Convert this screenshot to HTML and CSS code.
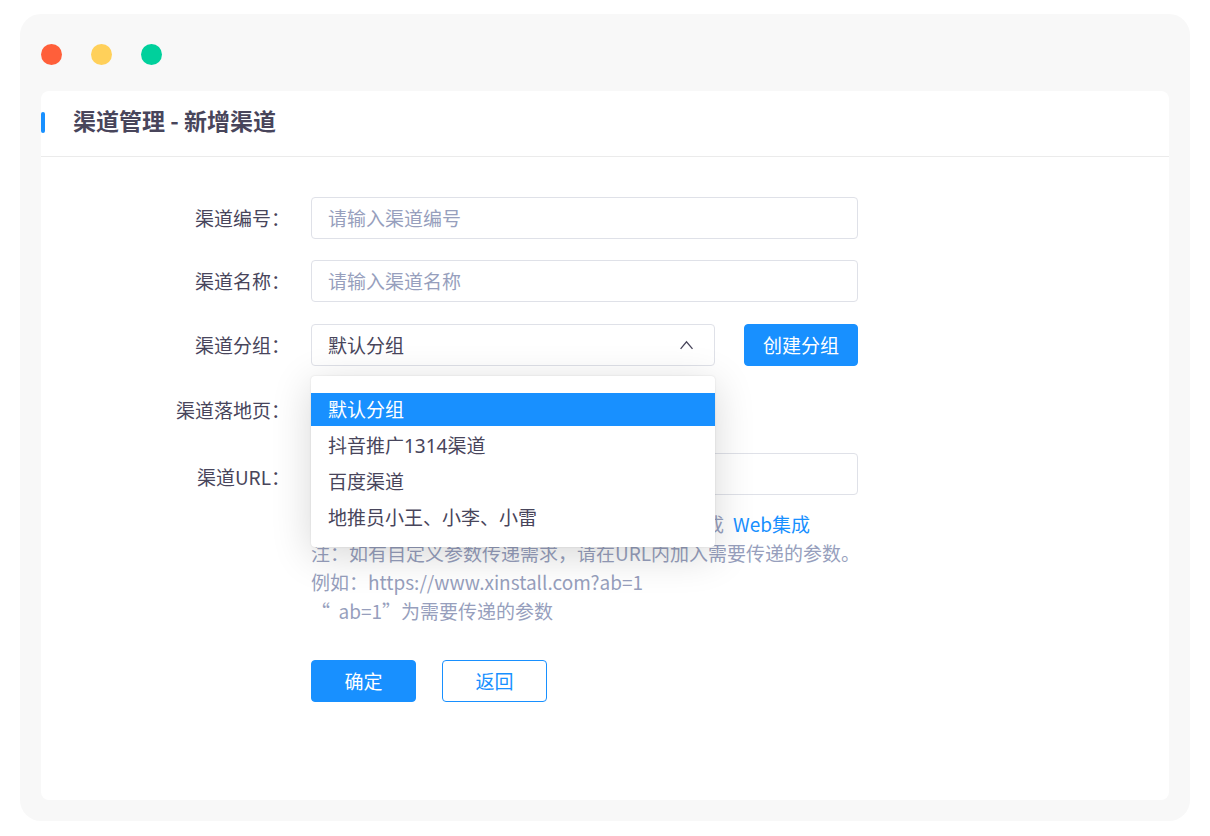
FILE: index.html
```html
<!DOCTYPE html>
<html lang="zh-CN">
<head>
<meta charset="utf-8">
<meta name="viewport" content="width=device-width, initial-scale=1">
<title>渠道管理 - 新增渠道</title>
<link rel="stylesheet" href="styles.css">
</head>
<body>
<div class="window">
  <div class="window-dots">
    <span class="dot dot-red"></span>
    <span class="dot dot-yellow"></span>
    <span class="dot dot-green"></span>
  </div>
  <main class="panel">
    <header class="panel-header">
      <span class="accent"></span>
      <h1 class="title">渠道管理 - 新增渠道</h1>
    </header>
    <form class="form">
      <div class="row">
        <label class="label" for="code">渠道编号：</label>
        <input class="field" id="code" type="text" placeholder="请输入渠道编号">
      </div>
      <div class="row">
        <label class="label" for="name">渠道名称：</label>
        <input class="field" id="name" type="text" placeholder="请输入渠道名称">
      </div>
      <div class="row row-roomy">
        <label class="label" for="group">渠道分组：</label>
        <div class="group">
          <div class="select-box">
            <select class="field select" id="group">
              <option>默认分组</option>
              <option>抖音推广1314渠道</option>
              <option>百度渠道</option>
              <option>地推员小王、小李、小雷</option>
            </select>
            <svg class="chevron" viewBox="0 0 14 10" aria-hidden="true"><path d="M.6 8.8 6.5 1.8l6 7"/></svg>
            <ul class="menu" role="listbox" aria-label="渠道分组">
              <li class="option option-active" role="option" aria-selected="true">默认分组</li>
              <li class="option" role="option" aria-selected="false">抖音推广1314渠道</li>
              <li class="option" role="option" aria-selected="false">百度渠道</li>
              <li class="option" role="option" aria-selected="false">地推员小王、小李、小雷</li>
            </ul>
          </div>
          <button class="button button-wide" type="button">创建分组</button>
        </div>
      </div>
      <div class="row row-roomy">
        <span class="label">渠道落地页：</span>
      </div>
      <div class="row row-top">
        <label class="label label-tall" for="url">渠道URL：</label>
        <div class="stack">
          <input class="field" id="url" type="text">
          <div class="notes">
            <p class="note note-links"><span>成</span><a class="link" href="#web">Web集成</a></p>
            <p class="note">注：如有自定义参数传递需求，请在URL内加入需要传递的参数。</p>
            <p class="note">例如：https://www.xinstall.com?ab=1</p>
            <p class="note">“&nbsp;&nbsp;ab=1”为需要传递的参数</p>
          </div>
          <div class="actions">
            <button class="button" type="submit">确定</button>
            <button class="button button-outline" type="button">返回</button>
          </div>
        </div>
      </div>
    </form>
  </main>
</div>
</body>
</html>
```

FILE: styles.css
```css
* {
  box-sizing: border-box;
}

body {
  margin: 0;
  padding: 14px 20px 15px;
  background: #fff;
  color: #48455b;
  font-family: "Noto Sans CJK SC", sans-serif;
  font-size: 19px;
  line-height: 29px;
}

.window {
  display: flex;
  flex-direction: column;
  gap: 26px;
  min-height: calc(100vh - 29px);
  padding: 30px 21px 21px;
  border-radius: 21px;
  background: #f8f8f8;
}

.window-dots {
  display: flex;
  gap: 29px;
}

.dot {
  width: 21px;
  height: 21px;
  border-radius: 50%;
}

.dot-red { background: #ff5f3a; }
.dot-yellow { background: #ffd05a; }
.dot-green { background: #00d09c; }

.panel {
  flex: 1;
  border-radius: 8px;
  background: #fff;
}

.panel-header {
  display: flex;
  align-items: center;
  gap: 28px;
  padding: 14px 0 17px;
  border-bottom: 1px solid #ebebeb;
}

.accent {
  width: 4px;
  height: 21px;
  border-radius: 2px;
  background: #1890ff;
}

.title {
  margin: 0;
  padding-bottom: 4px;
  font-size: 23px;
  font-weight: 700;
  line-height: 30px;
}

.form {
  display: flex;
  flex-direction: column;
  gap: 21px;
  padding: 40px 0;
}

.row {
  display: grid;
  grid-template-columns: 249px minmax(0, 547px);
  align-items: center;
  gap: 21px;
}

.row-roomy { min-height: 44px; }
.row-top { align-items: start; }

.label {
  padding-bottom: 2px;
  text-align: right;
}

.label-tall { line-height: 48px; }

.field {
  width: 100%;
  height: 42px;
  padding: 0 16px 2px;
  border: 1px solid #dfe1e8;
  border-radius: 4px;
  outline: 0;
  background: #fff;
  color: inherit;
  font: inherit;
}

.field::placeholder {
  color: #979fbd;
  opacity: 1;
}

.group {
  display: flex;
  gap: 29px;
}

.select-box {
  position: relative;
  flex: 1;
  min-width: 0;
}

.select {
  display: block;
  appearance: none;
}

.chevron {
  position: absolute;
  top: 16px;
  right: 21px;
  width: 14px;
  height: 10px;
  fill: none;
  stroke: #48455b;
  stroke-width: 1.3;
  pointer-events: none;
}

.menu {
  position: absolute;
  z-index: 1;
  top: 52px;
  left: 0;
  display: flex;
  flex-direction: column;
  gap: 3px;
  width: 100%;
  margin: 0;
  padding: 17px 0 13px;
  border-radius: 4px;
  background: #fff;
  box-shadow: 0 0 2px rgba(0, 0, 0, 0.12), 0 8px 40px rgba(0, 0, 0, 0.16);
  font-family: "Noto Sans", "Noto Sans CJK SC", sans-serif;
  list-style: none;
}

.option {
  padding: 2px 17px 0;
  line-height: 31px;
}

.option-active {
  background: #1890ff;
  color: #fff;
}

.button {
  width: 105px;
  height: 42px;
  padding: 0 0 2px;
  border: 1px solid #1890ff;
  border-radius: 4px;
  background: #1890ff;
  color: #fff;
  font: inherit;
}

.button-wide { width: 114px; }

.button-outline {
  background: #fff;
  color: #1890ff;
}

.notes {
  padding: 14px 0 35px;
  color: #979fbd;
}

.note {
  margin: 0;
  white-space: nowrap;
}

.note-links {
  display: flex;
  justify-content: flex-end;
  gap: 9px;
  padding-right: 48px;
}

.link {
  color: #1890ff;
  text-decoration: none;
}

.actions {
  display: flex;
  gap: 26px;
}
```
